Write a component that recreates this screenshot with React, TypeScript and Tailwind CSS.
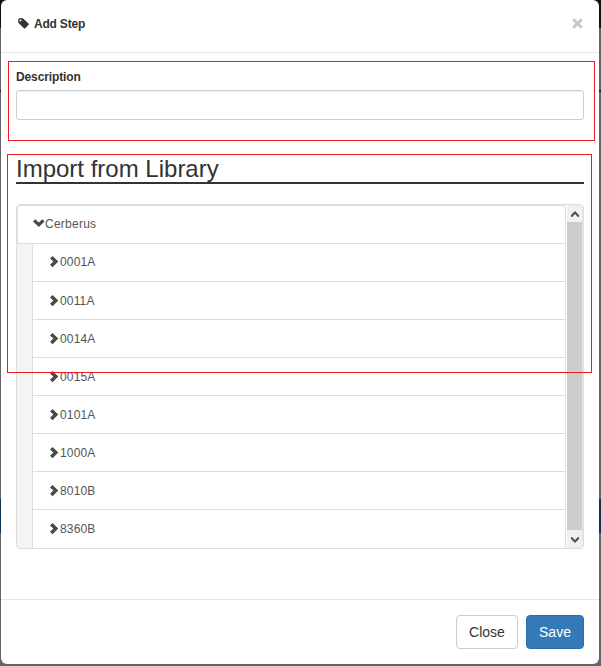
import React from "react";

const steps = ["0001A", "0011A", "0014A", "0015A", "0101A", "1000A", "8010B", "8360B"];

function Chevron({ down = false }: { down?: boolean }) {
  return down ? (
    <svg className="h-3 w-3 shrink-0" viewBox="0 0 12 12" fill="#4a4a4a">
      <path d="M0 3.6 2.3 1.3 5.8 4.6 9.3 1.3 11.6 3.6 5.8 9.1Z" />
    </svg>
  ) : (
    <svg className="h-3 w-[11px] shrink-0" viewBox="0 0 11 12" fill="#4a4a4a">
      <path d="M1 2.5 3.5 0.1 9.3 5.6 3.5 11.2 1 8.8 4.4 5.6Z" />
    </svg>
  );
}

function ScrollArrow({ down = false }: { down?: boolean }) {
  return (
    <div className="flex h-[17px] shrink-0 items-center justify-center">
      <svg className={down ? "h-[6px] w-[8px] rotate-180" : "h-[6px] w-[8px]"} viewBox="0 0 8 6" fill="#505050">
        <path d="M4 0 8 4V6H7L4 3 1 6H0V4Z" />
      </svg>
    </div>
  );
}

export default function App() {
  return (
    <div className="relative h-[666px] w-[601px] overflow-hidden bg-[#646567] px-px pr-[2px] font-['Liberation_Sans',Arial,sans-serif] text-[#333]">
      <div className="absolute left-0 top-0 h-7 w-full bg-[#111]" />
      <div className="absolute left-0 top-[90px] h-[2px] w-full bg-[#222]" />
      <div className="absolute left-0 top-[499px] h-[34px] w-full bg-[#0b3358]" />
      <div className="relative flex h-[664px] flex-col rounded-[6px] bg-white">
        <header className="flex h-[53px] shrink-0 items-center border-b border-[#e5e5e5] pb-[5px] pl-[17px] pr-[15px]">
          <svg className="h-[11px] w-[11px]" viewBox="0 0 11 11" fill="#333">
            <path fillRule="evenodd" d="M0.3 1.2 1.2 0.3H4.8L10.8 5.7V6.5L7 10.4H6.2L0.3 4.7ZM2.5 1.5A1 1 0 1 0 2.5 3.5 1 1 0 1 0 2.5 1.5Z" />
          </svg>
          <h1 className="ml-[5px] text-[12px] font-bold leading-4 tracking-[-0.2px]">Add Step</h1>
          <svg className="ml-auto mr-px h-[11px] w-[11px]" viewBox="0 0 11 11" stroke="#c8c8c8" strokeWidth="3">
            <path d="M1.2 1.2 9.8 9.8M9.8 1.2 1.2 9.8" />
          </svg>
        </header>
        <section className="ml-[7px] mt-2 h-[80px] w-[587px] shrink-0 border border-[#ed1c24] pl-[7px] pt-[7px]">
          <label className="block h-[17px] text-[12px] font-bold leading-[17px] tracking-[-0.12px]" htmlFor="description">Description</label>
          <input
            id="description"
            className="mt-1 block h-[30px] w-[568px] rounded-[3px] border border-[#ccc] px-2 text-[12px] shadow-[inset_0_1px_1px_rgba(0,0,0,0.075)] outline-none"
          />
        </section>
        <section className="mx-[15px] mt-[13px] flex h-[395px] shrink-0 flex-col">
          <h2 className="h-[30px] border-b-2 border-[#333] text-[24px] leading-[30px]">
            <span>Import from Library</span>
          </h2>
          <div className="mt-[20px] flex h-[345px] overflow-hidden rounded-[4px] border border-[#ddd] bg-[#f4f4f4]">
            <div className="flex min-w-0 flex-1 flex-col">
              <div className="flex h-[39px] shrink-0 items-center rounded-t-[4px] border border-[#ddd] bg-white pb-[2px] pl-[15px] text-[12px] text-[#555]">
                <Chevron down />
                <span className="tracking-[0.25px]">Cerberus</span>
              </div>
              <ul className="ml-[15px] grid h-[305px] grid-rows-8 rounded-tl-[4px] border-l border-r border-[#ddd] bg-white text-[12px] text-[#555]">
                {steps.map((step) => (
                  <li key={step} className="flex items-center border-b border-[#ddd] pl-4 first:pb-px last:border-b-0 last:pb-px">
                    <Chevron />
                    <span className="tracking-[0.15px]">{step}</span>
                  </li>
                ))}
              </ul>
            </div>
            <div className="flex w-[17px] shrink-0 flex-col border-l border-r border-l-white border-r-[#e8e8e8] bg-[#f0f0f0]">
              <ScrollArrow />
              <div className="flex-1 bg-[#cdcdcd]" />
              <div className="pt-px">
                <ScrollArrow down />
              </div>
            </div>
          </div>
        </section>
        <footer className="mt-[50px] flex flex-1 items-start justify-end gap-2 border-t border-[#e5e5e5] pr-[15px] pt-[15px] text-[14px]">
          <button className="h-[34px] w-[62px] rounded-[4px] border border-[#ccc] bg-white">Close</button>
          <button className="h-[34px] w-[58px] rounded-[4px] border border-[#2e6da4] bg-[#337ab7] text-white">Save</button>
        </footer>
      </div>
      <div className="pointer-events-none absolute left-[7px] top-[154px] h-[219px] w-[585px] border border-[#ed1c24]" />
    </div>
  );
}
